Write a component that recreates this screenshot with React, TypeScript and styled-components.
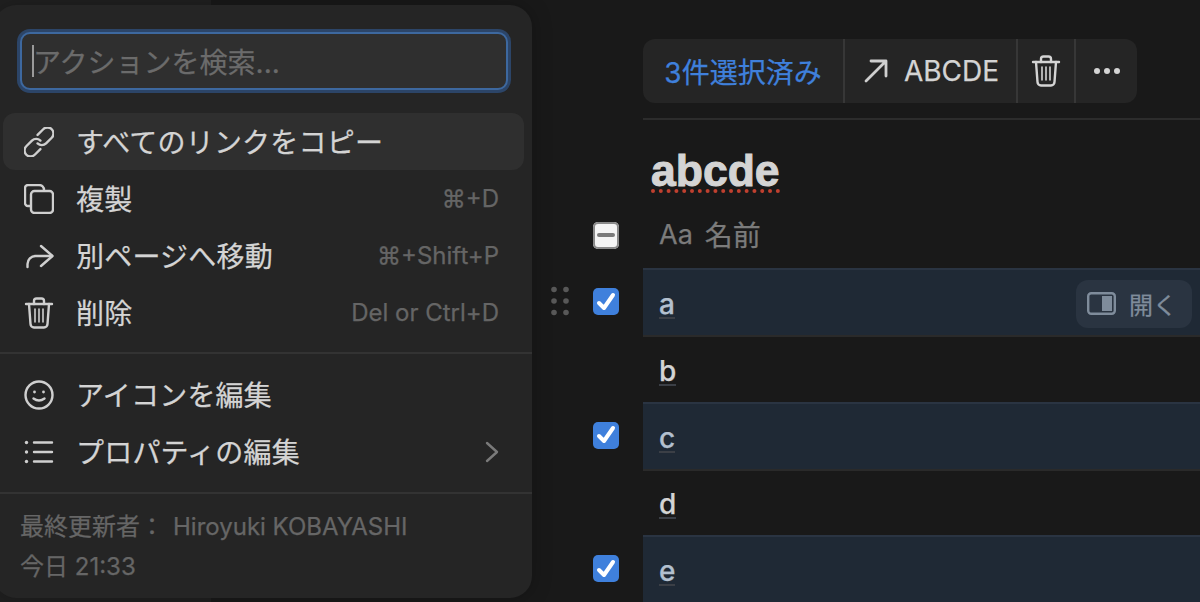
import styled, { createGlobalStyle } from 'styled-components'

const GlobalStyle = createGlobalStyle`
  html, body {
    margin: 0;
    padding: 0;
    background: #191919;
  }
  body {
    font-family: Inter, "Noto Sans CJK JP", sans-serif;
    -webkit-text-stroke: 0.25px currentColor;
  }
  * {
    box-sizing: border-box;
  }
`

const Page = styled.div`
  position: relative;
  display: flex;
  width: 1200px;
  height: 602px;
  overflow: hidden;
  background: #191919;
`

const Sidebar = styled.div`
  width: 211px;
  flex-shrink: 0;
  background: #202020;
`

const Main = styled.div`
  flex: 1;
  display: flex;
  flex-direction: column;
  padding: 39px 0 0 340px;
`

const Toolbar = styled.div`
  display: flex;
  align-self: flex-start;
  margin-left: 92px;
  height: 64px;
  border-radius: 12px;
  background: #252525;
  color: #d4d4d4;
  font-size: 28px;
`

const ToolCell = styled.div<{ $width: number }>`
  display: flex;
  align-items: center;
  justify-content: center;
  gap: 16px;
  width: ${p => p.$width}px;
  border-left: 2px solid #373737;
  &:first-child {
    border-left: none;
  }
`

const Selected = styled.span`
  color: #3f80dc;
`

const Rule = styled.div`
  height: 2px;
  margin: 15px 0 0 92px;
  background: #2c2c2c;
`

const Title = styled.div`
  align-self: flex-start;
  margin: 29px 0 9px 100px;
  height: 44px;
  font-family: "Liberation Sans", sans-serif;
  font-size: 44.5px;
  line-height: 44px;
  font-weight: 700;
  color: #d4d4d4;
  -webkit-text-stroke: 1px currentColor;
  border-bottom: 4px dotted #c0402f;
`

const Row = styled.div`
  display: grid;
  grid-template-columns: 92px 1fr;
  height: 67px;
`

const Gutter = styled.div`
  display: flex;
  align-items: center;
`

const DragSlot = styled.div`
  width: 42px;
  display: flex;
  align-items: center;
`

const Check = styled.div<{ $mixed?: boolean }>`
  display: flex;
  align-items: center;
  justify-content: center;
  width: 26px;
  height: 27px;
  border-radius: 5px;
  background: ${p => (p.$mixed ? '#f4f4f4' : '#3f80dc')};
  box-shadow: ${p => (p.$mixed ? 'inset 0 0 0 2px #8a8a8a' : 'none')};
`

const Minus = styled.div`
  width: 18px;
  height: 4px;
  border-radius: 2px;
  background: #7a7a7a;
`

const Cell = styled.div<{ $selected?: boolean }>`
  display: flex;
  align-items: center;
  justify-content: space-between;
  padding: 0 8px 0 16px;
  font-size: 28px;
  font-weight: 500;
  border-top: 2px solid ${p => (p.$selected ? '#2a3442' : '#2a2a2a')};
  background: ${p => (p.$selected ? '#1f2935' : 'transparent')};
  color: ${p => (p.$selected ? '#b3c0cf' : '#d4d4d4')};
`

const Heading = styled.div`
  display: flex;
  align-items: center;
  gap: 12px;
  padding: 0 0 2px 16px;
  font-size: 28px;
  color: #7b7b7b;
`

const SmallAa = styled.span`
  font-size: 27px;
`

const Name = styled.span`
  margin-top: 5px;
  line-height: 26px;
  border-bottom: 2px solid #3b3f46;
`

const OpenButton = styled.div`
  display: flex;
  align-items: center;
  gap: 13px;
  height: 48px;
  margin-top: 2px;
  padding: 0 15px 0 11px;
  border-radius: 12px;
  background: #2a3441;
  color: #7f8c9b;
  font-size: 24px;
  font-weight: 400;
`

const Menu = styled.div`
  position: absolute;
  left: -6px;
  top: 5px;
  width: 538px;
  height: 593px;
  padding: 27px 8px 0 9px;
  border-radius: 22px;
  background: #252525;
  box-shadow: 0 0 20px rgba(0, 0, 0, 0.25);
  color: #d4d4d4;
  font-size: 28px;
`

const SearchBox = styled.div`
  position: relative;
  display: flex;
  align-items: center;
  height: 58px;
  margin: 0 16px 23px 17px;
  padding-left: 11px;
  border: 2px solid #3d689f;
  border-radius: 10px;
  background: #2f2f2f;
  box-shadow: 0 0 0 3px #2c4568;
  color: #6b6b6b;
  &::before {
    content: '';
    position: absolute;
    left: 10px;
    top: 11px;
    width: 2px;
    height: 32px;
    background: #9a9a9a;
  }
`

const Item = styled.div<{ $active?: boolean }>`
  display: flex;
  align-items: center;
  gap: 22px;
  height: 57px;
  padding: 0 25px 0 21px;
  border-radius: 12px;
  background: ${p => (p.$active ? '#2f2f2f' : 'transparent')};
  svg {
    flex-shrink: 0;
  }
`

const Label = styled.span`
  flex: 1;
  margin-bottom: 2px;
  letter-spacing: 0.2px;
`

const Shortcut = styled.span`
  font-size: 24px;
  color: #656565;
`

const Separator = styled.div`
  height: 2px;
  margin: 11px -8px 12px -9px;
  background: #333333;
  & ~ & {
    margin-top: 12px;
  }
`

const Footer = styled.div`
  display: flex;
  flex-direction: column;
  gap: 10px;
  padding: 6px 0 0 17px;
  font-size: 24px;
  line-height: 30px;
  color: #666666;
`

const FooterName = styled.span`
  margin-left: 9px;
`

const Icon = ({ children, w = 30, h = 30, color = '#cfcfcf', sw = 2.4 }: { children: React.ReactNode; w?: number; h?: number; color?: string; sw?: number }) => (
  <svg width={w} height={h} viewBox={`0 0 ${w} ${h}`} fill="none" stroke={color} strokeWidth={sw} strokeLinecap="round" strokeLinejoin="round">
    {children}
  </svg>
)

const LinkIcon = () => (
  <Icon>
    <g transform="rotate(-45 15 15)">
      <path d="M11 21 H3 a6 6 0 0 1 0 -12 H11 a6 6 0 0 1 6 6" />
      <path d="M19 9 H27 a6 6 0 0 1 0 12 H19 a6 6 0 0 1 -6 -6" />
    </g>
  </Icon>
)

const CopyIcon = () => (
  <Icon>
    <path d="M6 22 H4 a3 3 0 0 1 -3 -3 V4 a3 3 0 0 1 3 -3 H15 a5 5 0 0 1 5 5" />
    <rect x="7" y="7" width="22" height="22" rx="3.5" />
  </Icon>
)

const MoveIcon = () => (
  <Icon>
    <path d="M3.5 26 V23 a8 8 0 0 1 8 -8 H28" />
    <path d="M17 5 L28.5 15 L17 25" />
  </Icon>
)

const TrashIcon = ({ color = '#cfcfcf' }: { color?: string }) => (
  <Icon color={color} h={32}>
    <path d="M2 7 H28" />
    <path d="M10 7 V4 a2.5 2.5 0 0 1 2.5 -2.5 H17.5 a2.5 2.5 0 0 1 2.5 2.5 V7" />
    <path d="M5 7 L6.5 27 a3.5 3.5 0 0 0 3.5 3.5 H20 a3.5 3.5 0 0 0 3.5 -3.5 L25 7" />
    <path d="M11 12 V25 M15 12 V25 M19 12 V25" strokeWidth={1.6} />
  </Icon>
)

const SmileIcon = () => (
  <Icon>
    <circle cx="15" cy="15" r="13.5" />
    <circle cx="10.5" cy="12" r="1.4" fill="#cfcfcf" stroke="none" />
    <circle cx="19.5" cy="12" r="1.4" fill="#cfcfcf" stroke="none" />
    <path d="M9.5 18.5 Q15 22.5 20.5 18.5" />
  </Icon>
)

const ListIcon = () => (
  <Icon>
    <path d="M10 5.5 H28 M10 15 H28 M10 24.5 H28" />
    <circle cx="2.5" cy="5.5" r="1.7" fill="#cfcfcf" stroke="none" />
    <circle cx="2.5" cy="15" r="1.7" fill="#cfcfcf" stroke="none" />
    <circle cx="2.5" cy="24.5" r="1.7" fill="#cfcfcf" stroke="none" />
  </Icon>
)

const ChevronIcon = () => (
  <Icon w={14} h={22} color="#7a7a7a">
    <path d="M2 2 L12 11 L2 20" />
  </Icon>
)

const ArrowIcon = () => (
  <Icon w={26} h={24} sw={2.8}>
    <path d="M4 22 L24 2 M9 2 H24 V17" />
  </Icon>
)

const DotsIcon = () => (
  <svg width="28" height="8" viewBox="0 0 28 8" fill="#d4d4d4">
    <circle cx="4" cy="4" r="3" />
    <circle cx="14" cy="4" r="3" />
    <circle cx="24" cy="4" r="3" />
  </svg>
)

const GripIcon = () => (
  <svg width="18" height="31" viewBox="0 0 18 31" fill="#585858">
    <circle cx="3" cy="3.5" r="2.8" />
    <circle cx="15" cy="3.5" r="2.8" />
    <circle cx="3" cy="15" r="2.8" />
    <circle cx="15" cy="15" r="2.8" />
    <circle cx="3" cy="26.5" r="2.8" />
    <circle cx="15" cy="26.5" r="2.8" />
  </svg>
)

const CheckMark = () => (
  <svg width="20" height="20" viewBox="0 0 20 20" fill="none" stroke="#fff" strokeWidth={4} strokeLinecap="round" strokeLinejoin="round">
    <path d="M3 11 L8 16 L17 3" />
  </svg>
)

const PanelIcon = () => (
  <svg width="29" height="23" viewBox="0 0 29 23" fill="none">
    <rect x="1.2" y="1.2" width="26.6" height="20.6" rx="3" stroke="#7f8c9b" strokeWidth="2.4" />
    <rect x="15" y="4" width="10" height="15" fill="#7f8c9b" />
  </svg>
)

const rows = [
  { name: 'a', selected: true, open: true, grip: true },
  { name: 'b', selected: false },
  { name: 'c', selected: true },
  { name: 'd', selected: false },
  { name: 'e', selected: true },
]

export default function App() {
  return (
    <Page>
      <GlobalStyle />
      <Sidebar />
      <Main>
        <Toolbar>
          <ToolCell $width={200}>
            <Selected>3件選択済み</Selected>
          </ToolCell>
          <ToolCell $width={173}>
            <ArrowIcon />
            ABCDE
          </ToolCell>
          <ToolCell $width={58}>
            <TrashIcon color="#d4d4d4" />
          </ToolCell>
          <ToolCell $width={63}>
            <DotsIcon />
          </ToolCell>
        </Toolbar>
        <Rule />
        <Title>abcde</Title>
        <Row>
          <Gutter>
            <DragSlot />
            <Check $mixed>
              <Minus />
            </Check>
          </Gutter>
          <Heading>
            <SmallAa>Aa</SmallAa>
            名前
          </Heading>
        </Row>
        {rows.map(row => (
          <Row key={row.name}>
            <Gutter>
              <DragSlot>{row.grip && <GripIcon />}</DragSlot>
              {row.selected && (
                <Check>
                  <CheckMark />
                </Check>
              )}
            </Gutter>
            <Cell $selected={row.selected}>
              <Name>{row.name}</Name>
              {row.open && (
                <OpenButton>
                  <PanelIcon />
                  開く
                </OpenButton>
              )}
            </Cell>
          </Row>
        ))}
      </Main>
      <Menu>
        <SearchBox>アクションを検索...</SearchBox>
        <Item $active>
          <LinkIcon />
          <Label>すべてのリンクをコピー</Label>
        </Item>
        <Item>
          <CopyIcon />
          <Label>複製</Label>
          <Shortcut>⌘+D</Shortcut>
        </Item>
        <Item>
          <MoveIcon />
          <Label>別ページへ移動</Label>
          <Shortcut>⌘+Shift+P</Shortcut>
        </Item>
        <Item>
          <TrashIcon />
          <Label>削除</Label>
          <Shortcut>Del or Ctrl+D</Shortcut>
        </Item>
        <Separator />
        <Item>
          <SmileIcon />
          <Label>アイコンを編集</Label>
        </Item>
        <Item>
          <ListIcon />
          <Label>プロパティの編集</Label>
          <ChevronIcon />
        </Item>
        <Separator />
        <Footer>
          <div>
            最終更新者：<FooterName>Hiroyuki KOBAYASHI</FooterName>
          </div>
          <div>今日 21:33</div>
        </Footer>
      </Menu>
    </Page>
  )
}
